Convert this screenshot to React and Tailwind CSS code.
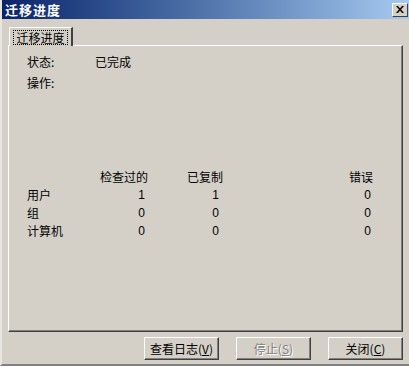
import React from 'react';

const FONT = { fontFamily: '"Noto Sans CJK SC", "Liberation Sans", sans-serif' };
const NUM = { fontFamily: '"Liberation Sans", sans-serif' };

const ROWS = [
  { label: '用户', checked: 1, copied: 1, errors: 0 },
  { label: '组', checked: 0, copied: 0, errors: 0 },
  { label: '计算机', checked: 0, copied: 0, errors: 0 },
];

function Button({ children, hotkey, disabled }) {
  return (
    <button
      className="w-[75px] h-[23px] bg-[#d4d0c8] border border-t-white border-l-white border-r-[#404040] border-b-[#404040] shadow-[inset_-1px_-1px_0_#808080] flex items-center justify-center text-[12px] leading-none"
    >
      <span className={disabled ? 'text-[#808080] [text-shadow:1px_1px_0_#ffffff]' : 'text-black'}>
        {children}(<span className="underline">{hotkey}</span>)
      </span>
    </button>
  );
}

export default function App() {
  return (
    <div
      className="w-[409px] h-[366px] bg-[#d4d0c8] flex flex-col overflow-hidden border-l-2 border-l-[#e8e6e0] border-b-2 border-b-[#808080]"
      style={FONT}
    >
      {/* Title bar */}
      <div className="h-[19px] shrink-0 flex items-center justify-between pl-[3px] pr-[1px] bg-gradient-to-r from-[#0a246a] to-[#a6caf0]">
        <span className="text-white font-bold text-[13px] leading-none tracking-[1px]">迁移进度</span>
        <div className="w-[16px] h-[14px] bg-[#d4d0c8] border border-t-white border-l-white border-r-[#404040] border-b-[#404040] flex items-center justify-center">
          <svg width="8" height="7" viewBox="0 0 8 7">
            <path d="M0 0h2l2 2.5L6 0h2L5 3.5 8 7H6L4 4.5 2 7H0l3-3.5z" fill="#000" />
          </svg>
        </div>
      </div>

      {/* Body */}
      <div className="flex-1 flex flex-col pl-[6px] pr-[6px] pt-[8px]">
        {/* Tab */}
        <div className="flex h-[18px]">
          <div className="relative z-10 ml-[1px] w-[64px] h-[19px] bg-[#d4d0c8] border-t border-l border-t-white border-l-white border-r-2 border-r-[#404040] rounded-tl-[2px] flex items-center justify-center">
            <span className="border border-dotted border-black px-[2px] text-[12px] leading-[13px] text-black">迁移进度</span>
          </div>
        </div>

        {/* Panel */}
        <div className="h-[287px] border border-t-white border-l-white border-r-[#404040] border-b-[#404040] shadow-[inset_-1px_-1px_0_#808080] pl-[18px] pt-[8px] text-[12px] text-black">
          <div className="flex h-[16px] items-center">
            <span className="w-[68px]">状态:</span>
            <span>已完成</span>
          </div>
          <div className="flex h-[16px] items-center mt-[5px]">
            <span>操作:</span>
          </div>

          <div className="mt-[77px] grid grid-cols-[73px_48px_75px_150px] auto-rows-[18px] items-center leading-none">
            <span />
            <span className="text-right">检查过的</span>
            <span className="text-right">已复制</span>
            <span className="text-right">错误</span>
            {ROWS.map((r) => (
              <React.Fragment key={r.label}>
                <span>{r.label}</span>
                <span className="text-right pr-[3px]" style={NUM}>{r.checked}</span>
                <span className="text-right pr-[4px]" style={NUM}>{r.copied}</span>
                <span className="text-right pr-[2px]" style={NUM}>{r.errors}</span>
              </React.Fragment>
            ))}
          </div>
        </div>

        {/* Buttons */}
        <div className="flex justify-end gap-[17px] mt-[5px]">
          <Button hotkey="V">查看日志</Button>
          <Button hotkey="S" disabled>停止</Button>
          <Button hotkey="C">关闭</Button>
        </div>
      </div>
    </div>
  );
}
